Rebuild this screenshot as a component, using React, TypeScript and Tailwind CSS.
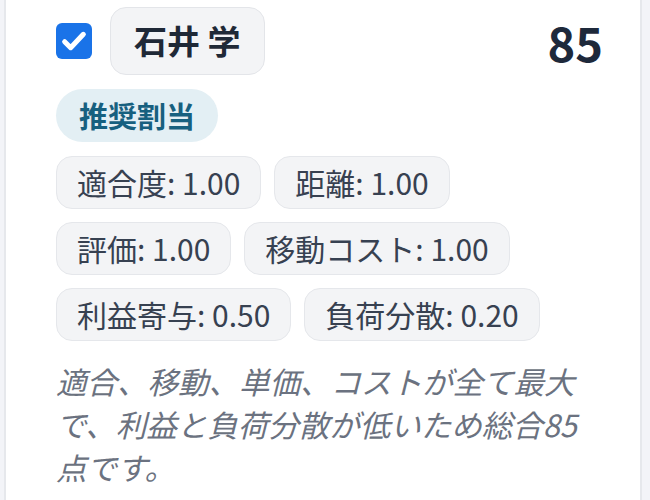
const font = { fontFamily: '"Noto Sans CJK JP", "Noto Sans", sans-serif' };

const metrics = [
  ["適合度: 1.00", "距離: 1.00"],
  ["評価: 1.00", "移動コスト: 1.00"],
  ["利益寄与: 0.50", "負荷分散: 0.20"],
];

function Check() {
  return (
    <div className="flex h-[36px] w-[36px] items-center justify-center rounded-[6px] bg-[#1a73e8]">
      <svg viewBox="0 0 24 24" className="h-[32px] w-[32px]" fill="none">
        <path d="M5 12.5l4.5 4.5L19 7" stroke="white" strokeWidth="3.8" strokeLinecap="round" strokeLinejoin="round" />
      </svg>
    </div>
  );
}

function Chip({ label }: { label: string }) {
  return (
    <span className="rounded-[16px] border border-[#e5e7eb] bg-[#f3f4f6] px-[20px] py-[7px] text-[30px] leading-[37px] text-[#374151]">
      {label}
    </span>
  );
}

export default function App() {
  return (
    <div className="h-[500px] w-[650px] overflow-hidden bg-[#f3f4f8]" style={font}>
      <div className="ml-[4px] h-full w-[638px] border-x-2 border-[#e6e8ec] bg-white pl-[50px] pr-[37px] pt-[7px]">
        <div className="flex items-center justify-between">
          <div className="flex items-center gap-[18px]">
            <Check />
            <div className="flex h-[68px] items-center rounded-[16px] border border-[#e3e5e9] bg-[#f3f4f6] px-[23px] text-[33px] font-bold text-[#1f2937]">
              石井 学
            </div>
          </div>
          <div className="text-[47px] font-bold leading-none text-[#1e293b]">85</div>
        </div>

        <div className="mt-[14px] flex">
          <span className="rounded-full bg-[#e3eff4] px-[23px] py-[8px] text-[29px] font-bold leading-[37px] text-[#17607f]">
            推奨割当
          </span>
        </div>

        <div className="mt-[14px] flex flex-col gap-[13px]">
          {metrics.map((row, i) => (
            <div key={i} className="flex gap-[13px]">
              {row.map((m) => (
                <Chip key={m} label={m} />
              ))}
            </div>
          ))}
        </div>

        <p className="mt-[19px] w-[535px] text-[30.5px] italic leading-[43px] text-[#6b7280]">
          適合、移動、単価、コストが全て最大で、利益と負荷分散が低いため総合85点です。
        </p>
      </div>
    </div>
  );
}
